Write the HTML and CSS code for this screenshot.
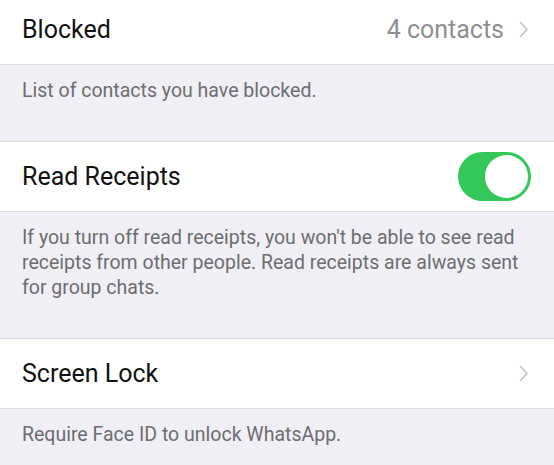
FILE: index.html
```html
<!DOCTYPE html>
<html lang="en">
<head>
    <meta charset="UTF-8">
    <meta name="viewport" content="width=device-width, initial-scale=1.0">
    <title>Privacy</title>
    <link rel="stylesheet" href="styles.css">
</head>
<body>
    <div class="settings">
        <div class="row first">
            <span class="label">Blocked</span>
            <span class="value">4 contacts</span>
            <svg class="chevron" viewBox="0 0 10 17" width="10" height="17">
                <path d="M1.5 1.5 L8 8.5 L1.5 15.5" fill="none" stroke="#c7c7cc" stroke-width="1.8" stroke-linecap="round" stroke-linejoin="round"/>
            </svg>
        </div>
        <div class="footer">List of contacts you have blocked.</div>

        <div class="row">
            <span class="label">Read Receipts</span>
            <div class="toggle on"><div class="knob"></div></div>
        </div>
        <div class="footer">If you turn off read receipts, you won't be able to see read receipts from other people. Read receipts are always sent for group chats.</div>

        <div class="row">
            <span class="label">Screen Lock</span>
            <svg class="chevron" viewBox="0 0 10 17" width="10" height="17">
                <path d="M1.5 1.5 L8 8.5 L1.5 15.5" fill="none" stroke="#c7c7cc" stroke-width="1.8" stroke-linecap="round" stroke-linejoin="round"/>
            </svg>
        </div>
        <div class="footer">Require Face ID to unlock WhatsApp.</div>
    </div>
</body>
</html>
```

FILE: styles.css
```css
body {
    font-family: Roboto, 'Noto Sans', sans-serif;
    background-color: #f0eff5;
    margin: 0;
    padding: 0;
    overflow: hidden;
}
.settings {
    margin-top: -6px;
}
.row {
    display: flex;
    align-items: center;
    height: 69px;
    padding: 0 25px 0 22px;
    background-color: #fff;
    border-top: 1px solid #dcdce0;
    border-bottom: 1px solid #dcdce0;
}
.row.first {
    border-top: none;
    height: 70px;
}
.label {
    flex: 1;
    font-size: 25px;
    color: #111;
}
.value {
    font-size: 25px;
    color: #8e8e93;
    margin-right: 15px;
}
.chevron {
    display: block;
}
.footer {
    padding: 13px 30px 38px 22px;
    font-size: 19.5px;
    line-height: 25px;
    color: #6d6d72;
}
.toggle {
    width: 73px;
    height: 49px;
    border-radius: 25px;
    background-color: #34c759;
    position: relative;
    margin-right: -2px;
}
.toggle .knob {
    position: absolute;
    top: 3px;
    right: 3px;
    width: 43px;
    height: 43px;
    border-radius: 50%;
    background-color: #fff;
}
```
